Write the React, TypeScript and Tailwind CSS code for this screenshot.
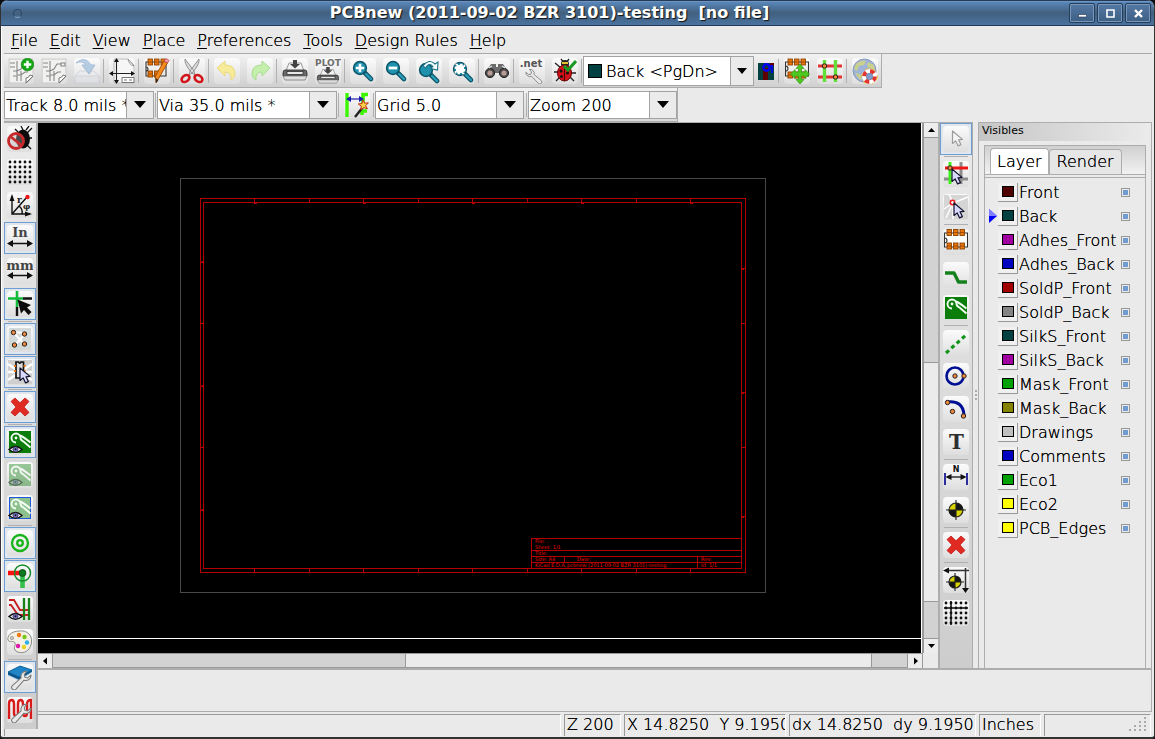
import { useState } from "react";
import type { ReactNode } from "react";

/* ---------- icon drawings, all on a 26 x 26 field ---------- */

function Sheet() {
  return (
    <g>
      <path d="M1 1h24v18l-6 6H1z" fill="#f1f1ef" stroke="#c4c4c4" />
      <path d="M25 18l-7 7v-5q3 0 4-3z" fill="#fff" stroke="#777" />
      <path d="M2 5h5M2 9h5M9 3v8M5 13h4l4-2 3-5h4M9 11v6M5 18h4v5M13 13v10M9 17h4l4-3h3M20 5h4v3h-4z" fill="none" stroke="#858585" strokeWidth="1.1" />
    </g>
  );
}

function Pads({ y, xs = [4, 10.5, 17] }: { y: number; xs?: number[] }) {
  return (
    <g>
      {xs.map((x) => (
        <g key={x}>
          <rect x={x} y={y} width="4.5" height="6" fill="#e8760f" stroke="#8d4300" strokeWidth=".9" />
          <path d={`M${x} ${y + 3}h4.5`} stroke="#8d4300" strokeWidth=".8" />
        </g>
      ))}
    </g>
  );
}

function Lens({ children, x = 10, y = 10 }: { children?: ReactNode; x?: number; y?: number }) {
  return (
    <g>
      <path d={`M${x + 5} ${y + 5}l6 6`} stroke="#0b5468" strokeWidth="4.6" strokeLinecap="round" />
      <path d={`M${x + 6} ${y + 6}l5 5`} stroke="#2d9db8" strokeWidth="2.4" strokeLinecap="round" />
      <circle cx={x} cy={y} r="6.4" fill="#2092ae" stroke="#0b5468" strokeWidth="1.5" />
      {children}
    </g>
  );
}

function Pointer({ x, y, fill = "#d9d9fb", stroke = "#10102c" }: { x: number; y: number; fill?: string; stroke?: string }) {
  return (
    <path
      transform={`translate(${x} ${y})`}
      d="M0 0v12.5l3.2-2.6 2.4 5 2.8-1.3-2.4-4.8 4-.4z"
      fill={fill}
      stroke={stroke}
      strokeWidth="1.2"
      strokeLinejoin="round"
    />
  );
}

function Wrench({ fill = "#e9e9e9" }: { fill?: string }) {
  return (
    <path
      d="M24.500 8.500a5.500 5.500 0 0 1-7.500 5.500l-8.500 9.500q-2 1.800-3.800 0t0-3.700l9.300-8.300a5.500 5.500 0 0 1 6-7l-2.700 3.500 .7 3 3 .6z"
      fill={fill}
      stroke="#7b7b7b"
      strokeWidth="1.1"
      strokeLinejoin="round"
    />
  );
}

function Printer() {
  return (
    <g>
      <path d="M7 5h12l3 8H4z" fill="#f4f4f4" stroke="#999" />
      <path d="M3 12h20q2 0 2 3v3H1v-3q0-3 2-3z" fill="#6a6a6a" stroke="#222" strokeWidth=".8" />
      <rect x="5" y="13.500" width="16" height="3" fill="#e8e8e8" stroke="#222" strokeWidth=".7" />
      <path d="M1 18h24l-2 4H3z" fill="#dedede" stroke="#777" strokeWidth=".8" />
      <path d="M11 2h4v4h3l-5 4.500L8 6h3z" fill="#444" />
    </g>
  );
}

function CopperArea({ faded = false, framed = false }: { faded?: boolean; framed?: boolean }) {
  return (
    <g opacity={faded ? 0.4 : 1}>
      <rect x="2.500" y="2.500" width="21" height="21" fill={framed ? "#8cc08c" : "#0a7d0a"} stroke={framed ? "#2157d8" : "#0a7d0a"} />
      <path d="M9 13.500a4.500 4.500 0 1 1 4.500-4.500q0 2 3 3.500l7 6M13 6.500q3 1 10.500 7" fill="none" stroke="#f4fff4" strokeWidth="1.9" />
      <circle cx="9" cy="9" r="1.400" fill="#f4fff4" />
    </g>
  );
}

function Eye() {
  return (
    <g>
      <path d="M2 20.500q6.500-6 13 0-6.500 5.500-13 0z" fill="#ececff" stroke="#111" strokeWidth="1.4" />
      <circle cx="8.500" cy="20.300" r="2.600" fill="#7a76cf" stroke="#222" strokeWidth=".6" />
      <circle cx="8.500" cy="20.300" r="1" fill="#111" />
    </g>
  );
}

function Cross() {
  return (
    <path
      d="M4 7.500L8 4l5 4.800L18 4l4 3.500-5 5.500 5 5.500-4 3.500-5-4.800L8 22l-4-3.500L9 13z"
      fill="#e02a22"
      stroke="#c01b15"
      strokeWidth=".8"
      strokeLinejoin="round"
    />
  );
}

function Target({ cx, cy, r }: { cx: number; cy: number; r: number }) {
  return (
    <g>
      <circle cx={cx} cy={cy} r={r} fill="#d8d300" stroke="#222" strokeWidth="1.2" />
      <path d={`M${cx} ${cy}V${cy - r}A${r} ${r} 0 0 1 ${cx + r} ${cy}zM${cx} ${cy}V${cy + r}A${r} ${r} 0 0 1 ${cx - r} ${cy}z`} fill="#151515" />
      <path d={`M${cx - r - 3} ${cy}h${2 * r + 6}M${cx} ${cy - r - 3}v${2 * r + 6}`} stroke="#222" strokeWidth="1.1" />
    </g>
  );
}

function Dot({ x, y, r = 2.2 }: { x: number; y: number; r?: number }) {
  return <circle cx={x} cy={y} r={r} fill="#f0883c" stroke="#222" strokeWidth="1" />;
}

function DotGrid() {
  const steps = [3, 8, 13, 18, 23];
  return (
    <g fill="#111">
      {steps.flatMap((y) => steps.map((x) => <circle key={`${x}-${y}`} cx={x} cy={y} r="1.400" />))}
    </g>
  );
}

const icons: Record<string, ReactNode> = {
  newBoard: (
    <g>
      <Sheet />
      <circle cx="19.500" cy="6.500" r="6.300" fill="#12a812" stroke="#0a7a0a" strokeWidth=".6" />
      <path d="M19.500 2.800v7.400M15.800 6.500h7.400" stroke="#fff" strokeWidth="2.400" />
    </g>
  ),
  openBoard: <Sheet />,
  save: (
    <g opacity=".45">
      <path d="M6 13h14l5 5v7H1v-7z" fill="#e8eaf0" stroke="#b4bcc9" />
      <path d="M1 18h24v7H1z" fill="#dadee6" stroke="#b4bcc9" />
      <path d="M2 5Q11-3 17 7h4l-6 9-7-9h4Q9 2 2 5z" fill="#6b9fd0" stroke="#4b7fb8" />
    </g>
  ),
  pageSettings: (
    <g>
      <path d="M5 1h14l6 6v18H5z" fill="#f6f6f6" stroke="#bbb" />
      <path d="M19 1l6 7q-5-1-6-7z" fill="#fff" stroke="#888" strokeWidth=".8" />
      <path d="M7.500 3v20M2.500 15.500H24" stroke="#222" strokeWidth="1.100" />
      <path d="M7.500 0l2.500 4h-5zM7.500 26l2.500-4h-5zM0 15.500l4-2.500v5zM26 15.500l-4-2.500v5z" fill="#111" />
      <path d="M13 19.500h12v5H13zM15 22h3M20 22h3" fill="#fff" stroke="#777" />
    </g>
  ),
  editModule: (
    <g>
      <path d="M2 4h20v14H2zM2 9a2 2 0 0 1 0 4" fill="none" stroke="#333" strokeWidth="1.100" />
      <Pads y={1} />
      <Pads y={13} xs={[4, 10.5]} />
      <path d="M23.500 5l-8 14-3.500 6-.5-7 8.500-15z" fill="#f58a1f" stroke="#9b4a00" strokeWidth=".9" />
      <path d="M20 3l3.500 2 1.500-2.500q-1.500-2.500-3.500-1.500z" fill="#f1a0a6" stroke="#b45" strokeWidth=".8" />
      <path d="M11.500 20l.5 5 2.500-3z" fill="#2a2a2a" />
    </g>
  ),
  cut: (
    <g>
      <path d="M6 1q-1 5 7 14l3 2-1-4zM20 1q1 5-7 14l-3 2 1-4z" fill="#dcdcdc" stroke="#888" strokeWidth=".9" />
      <g fill="none" stroke="#d3161a" strokeWidth="2.600">
        <ellipse cx="6.500" cy="20.500" rx="4.300" ry="3" transform="rotate(-35 6.500 20.500)" />
        <ellipse cx="19.500" cy="20.500" rx="4.300" ry="3" transform="rotate(35 19.500 20.500)" />
      </g>
    </g>
  ),
  undo: <path d="M3 10l8-7v4q10 0 10 9 0 4-4 6 1-8-6-8v4z" fill="#f7eb9a" stroke="#ead97c" strokeLinejoin="round" />,
  redo: <path d="M23 10l-8-7v4Q5 7 5 16q0 4 4 6-1-8 6-8v4z" fill="#c5efac" stroke="#a9dd90" strokeLinejoin="round" />,
  print: <Printer />,
  plot: (
    <g>
      <g transform="translate(1.500 7.500) scale(.88 .8)">
        <Printer />
      </g>
      <text x="13" y="7.500" textAnchor="middle" className="fill-[#6d6d6d] font-['DejaVu_Sans'] text-[9px] font-bold">PLOT</text>
    </g>
  ),
  zoomIn: (
    <Lens>
      <path d="M10 5.800v8.400M5.800 10h8.400" stroke="#fff" strokeWidth="2.600" />
    </Lens>
  ),
  zoomOut: (
    <Lens>
      <path d="M5.800 10h8.400" stroke="#fff" strokeWidth="2.800" />
    </Lens>
  ),
  zoomRedraw: (
    <g>
      <Lens y={12} />
      <path d="M7 8q6-8 12-2l3-2-.5 8-7-1.500 2.500-2Q13 4 9.500 10z" fill="#f8ffff" stroke="#1c7288" strokeWidth="1.100" />
    </g>
  ),
  zoomFit: (
    <Lens x={11} y={11}>
      <rect x="7" y="7" width="8" height="8" rx="2" fill="#fff" />
      <rect x="6.500" y="6.500" width="9" height="9" fill="none" stroke="#fff" strokeWidth="1.600" strokeDasharray="2.500 2" />
    </Lens>
  ),
  find: (
    <g>
      <path d="M7 6h5v3h2V6h5l5 8-4 5-4-4h-6l-4 4-4-5z" fill="#6c6c6c" />
      <circle cx="6" cy="15" r="4.600" fill="#4a4a4a" stroke="#222" />
      <circle cx="20" cy="15" r="4.600" fill="#4a4a4a" stroke="#222" />
      <circle cx="6" cy="15" r="2.600" fill="#b79a94" />
      <circle cx="20" cy="15" r="2.600" fill="#b79a94" />
      <path d="M8 8l-3 2M18 8l3 2" stroke="#ddd" strokeWidth="1.500" />
    </g>
  ),
  netlist: (
    <g>
      <g transform="translate(26 8) scale(-.78 .74)">
        <Wrench />
      </g>
      <text x="12" y="9" textAnchor="middle" className="fill-[#555] font-['DejaVu_Sans'] text-[10px] font-bold">.net</text>
    </g>
  ),
  drc: (
    <g>
      <path d="M3 5l6 5M2 14h6M4 23l5-5M22 23l-5-5M9 1l3 4M17 1l-3 4M24 15h-6" stroke="#222" strokeWidth="1.300" />
      <circle cx="13" cy="6" r="4" fill="#222" />
      <path d="M10 5h6" stroke="#e2c22b" strokeWidth="2" />
      <ellipse cx="12.500" cy="15" rx="7" ry="8" fill="#d21118" stroke="#6b0508" />
      <path d="M12.500 8v15" stroke="#400" />
      <g fill="#111">
        <circle cx="9" cy="13" r="1.500" />
        <circle cx="15.500" cy="15" r="1.500" />
        <circle cx="9.500" cy="18.500" r="1.500" />
      </g>
      <path d="M12 8l4 4 8-9" fill="none" stroke="#1a9a20" strokeWidth="3.200" />
    </g>
  ),
  layerPair: (
    <g>
      <path d="M5 5h16v17H5z" fill="#004040" />
      <path d="M10 10h5v12h-5zM17 5h4v3h-4z" fill="#5c0000" />
      <circle cx="13.500" cy="9.500" r="3.200" fill="none" stroke="#0000f4" strokeWidth="2.400" />
      <path d="M16 8h3v7" fill="none" stroke="#0000f4" strokeWidth="1.800" />
    </g>
  ),
  moduleMode: (
    <g>
      <path d="M1.500 4h23v14h-23zM1.500 8a2.500 2.500 0 0 1 0 5" fill="none" stroke="#333" strokeWidth="1.100" />
      <Pads y={1} />
      <Pads y={14} />
      <path d="M16 6l4 4.500h-2.500v3.500H21v-2.500l4.500 4.500-4.500 4.500V18h-3.500v3.500H20L16 26l-4-4.500h2.500V18H11v2.500L6.500 16l4.500-4.500V14h3.500v-3.500H12z" fill="#4fc921" stroke="#349b10" strokeWidth=".7" />
    </g>
  ),
  trackMode: (
    <g>
      <path d="M1 8h24M1 19h24" stroke="#e03434" strokeWidth="3" />
      <path d="M7.500 2v22M18.500 2v22" stroke="#63e03a" strokeWidth="3.400" />
      <Dot x={7.5} y={8} />
      <Dot x={18.5} y={19} />
    </g>
  ),
  web: (
    <g>
      <circle cx="12.500" cy="12.500" r="11.500" fill="#9fb3d9" stroke="#8a99b8" />
      <path d="M4 6q5-5 10-3l-2 4-5 1-2 5-3-2zM16 4l6 3 1 6-5-2-3-3zM3 15l5 1 2 6-3-1z" fill="#c9cf8d" />
      <circle cx="17.500" cy="18.500" r="5.500" fill="none" stroke="#fff" strokeWidth="4" />
      <circle cx="17.500" cy="18.500" r="5.500" fill="none" stroke="#e4322e" strokeWidth="4" strokeDasharray="4.320 4.320" />
      <circle cx="17.500" cy="18.500" r="7.900" fill="none" stroke="#e9c22e" strokeWidth=".9" strokeDasharray="4 4" />
      <circle cx="17.500" cy="18.500" r="3.200" fill="#7f9bd0" stroke="#777" strokeWidth=".5" />
    </g>
  ),
  autoTrack: (
    <g>
      <path d="M3 1v24" stroke="#3cf600" strokeWidth="3.400" />
      <path d="M24 2.500h-5v13M18 23v-4h5" fill="none" stroke="#3cf600" strokeWidth="3.600" />
      <path d="M4 7h14" stroke="#1b1bb0" strokeWidth="1.200" />
      <path d="M2 7l5-3v6zM20 7l-5-3v6z" fill="#1b1bb0" />
      <path d="M11 25l8-10" stroke="#222" strokeWidth="2.400" />
      <path d="M19 8l1.600 3.200 3.800-.4-2.700 2.900 1.700 3.200-3.500-1.300-3 2.200.4-3.700-3-2.100 3.700-.6z" fill="#ffd24a" stroke="#c22d12" />
    </g>
  ),
  drcOff: (
    <g>
      <path d="M8 3l5 5M25 2l-5 5M25 12h-5M24 23l-4-4M14 0l2 4M22 0l-3 4" stroke="#111" strokeWidth="1.300" />
      <ellipse cx="16" cy="13" rx="7" ry="9.500" fill="#0c0c0c" />
      <circle cx="9" cy="15" r="7.500" fill="#bbb" fillOpacity=".35" stroke="#c72a2a" strokeWidth="2.800" />
      <path d="M3.500 10.500l11 9" stroke="#c72a2a" strokeWidth="2.800" />
    </g>
  ),
  grid: <DotGrid />,
  polar: (
    <g>
      <path d="M5 4v18h18M5 22L20 5M12 14q4 3 3 8" fill="none" stroke="#111" strokeWidth="1.400" />
      <path d="M5 2l2.500 7h-5zM25 22l-7-2.500v5z" fill="#111" />
      <circle cx="20.500" cy="5" r="2.200" fill="#f01818" />
      <text x="10" y="11" className="fill-[#222] font-['DejaVu_Serif'] text-[9px] font-bold">r</text>
      <text x="16" y="17" className="fill-[#222] font-['DejaVu_Serif'] text-[8px] font-bold">φ</text>
    </g>
  ),
  inches: (
    <g>
      <text x="13" y="12" textAnchor="middle" className="fill-[#444] font-['DejaVu_Serif'] text-[13px] font-bold">In</text>
      <path d="M3 18.500h20" stroke="#111" strokeWidth="1.500" />
      <path d="M0 18.500l6-3.500v7zM26 18.500l-6-3.500v7z" fill="#111" />
    </g>
  ),
  mm: (
    <g>
      <text x="13" y="12" textAnchor="middle" className="fill-[#444] font-['DejaVu_Serif'] text-[13px] font-bold">mm</text>
      <path d="M3 17.500h20" stroke="#111" strokeWidth="1.500" />
      <path d="M0 17.500l6-3.500v7zM26 17.500l-6-3.500v7z" fill="#111" />
    </g>
  ),
  cursorShape: (
    <g>
      <path d="M16 7.500h9M10 16v9" stroke="#111" strokeWidth="2.400" />
      <path d="M1 7.500h15M10 0v16" stroke="#12bb3a" strokeWidth="2.600" />
      <path d="M10.500 8.500l3.500 14 3-3.500 4.500 5 3-3-4.500-4.500 4-2.500z" fill="#0a0a0a" />
    </g>
  ),
  ratsnest: (
    <g>
      <rect x="2" y="2" width="22" height="22" fill="#d3dad9" />
      <path d="M6 6l12 13M8 19l11-12M6 6l11 1" stroke="#fff" strokeWidth="2" />
      <Dot x={6.5} y={6.5} />
      <Dot x={17.500} y={8} />
      <Dot x={7.5} y={19} />
      <Dot x={17.500} y={18} />
    </g>
  ),
  moduleRatsnest: (
    <g>
      <rect x="1" y="1" width="24" height="24" fill="#cfcfcf" />
      <path d="M1 5l24 16M1 21L25 5M1 13h24" stroke="#fff" strokeWidth="2.600" />
      <path d="M9 3h2.500q1.200 2.500 2.500 0h2.500v16H9z" fill="#ddd" stroke="#111" strokeWidth="1.700" />
      <path d="M8 6v2M8 11v2M17.500 6v2M17.500 11v2" stroke="#e8760f" strokeWidth="2" />
      <Pointer x={13} y={9} />
    </g>
  ),
  cross: <Cross />,
  zoneShow: (
    <g>
      <CopperArea />
      <Eye />
    </g>
  ),
  zoneHide: (
    <g>
      <CopperArea faded />
      <g opacity=".45">
        <Eye />
      </g>
    </g>
  ),
  zoneOutline: (
    <g>
      <CopperArea framed />
      <Eye />
    </g>
  ),
  padSketch: (
    <g fill="none" stroke="#18b41c" strokeWidth="2.300">
      <circle cx="13" cy="13" r="8" />
      <circle cx="13" cy="13" r="2.800" />
    </g>
  ),
  viaSketch: (
    <g>
      <path d="M1 10h12" stroke="#fb1010" strokeWidth="4.600" />
      <path d="M15.500 10v15" stroke="#35c04e" strokeWidth="4.600" />
      <circle cx="15.500" cy="10" r="8" fill="none" stroke="#148a2a" strokeWidth="1.500" />
      <circle cx="15.500" cy="10" r="3.400" fill="#0c7a1e" stroke="#0a5515" />
    </g>
  ),
  trackSketch: (
    <g>
      <path d="M2 4h5l6 10h10M2 9h2l7 10h12" fill="none" stroke="#c52020" strokeWidth="1.800" />
      <path d="M17 2v22M22 2v22" stroke="#178017" strokeWidth="2.300" />
      <Eye />
    </g>
  ),
  palette: (
    <g>
      <path d="M13 2C3 2 0 8 1 11s6 0 7 3-2 4 0 7 9 4 13 0 5-12 1-16-9-3-9-3z" fill="#f4f0e4" stroke="#888" />
      <circle cx="5" cy="9" r="1.600" fill="#ccc" stroke="#888" strokeWidth=".7" />
      <circle cx="12" cy="6" r="2.200" fill="#f47a16" />
      <circle cx="17.500" cy="8" r="2.200" fill="#78c818" />
      <circle cx="20" cy="13.500" r="2.200" fill="#2db0e8" />
      <circle cx="17" cy="18" r="2.200" fill="#e8d21a" />
      <circle cx="11" cy="17" r="2.200" fill="#e01aa8" />
    </g>
  ),
  layersManager: (
    <g>
      <path d="M1 11l11 5 13-8v-2L13 2 1 8z" fill="#0b4f80" />
      <path d="M1 8l12-6 12 4-13 7z" fill="#1f85c8" stroke="#0b5d98" strokeWidth=".8" />
      <path d="M1 11l11 5 13-8" fill="none" stroke="#7cc0ec" strokeWidth=".8" />
      <g transform="translate(1 3) scale(.94)">
        <Wrench />
      </g>
    </g>
  ),
  microwave: (
    <g>
      <path d="M2 22V7q0-4 2.500-4T7 7v9q0 3 2 3t2-3V7q0-4 2.500-4T16 7v9q0 3 2 3t2-3V7q0-4 4-4v19" fill="none" stroke="#d81a1a" strokeWidth="2.400" />
      <g transform="translate(1 3) scale(.94)">
        <Wrench />
      </g>
    </g>
  ),
  arrow: <Pointer x={9.5} y={5} fill="#f4f4f4" stroke="#9c9c9c" />,
  netHighlight: (
    <g>
      <path d="M18 1v22M1 18h24" stroke="#8c8c8c" strokeWidth="3" />
      <path d="M7 1v22" stroke="#3ff01a" strokeWidth="3" />
      <path d="M2 7h23" stroke="#f01414" strokeWidth="3" />
      <Dot x={7} y={7} />
      <Pointer x={9} y={8} />
    </g>
  ),
  localRats: (
    <g>
      <rect x="1" y="1" width="24" height="24" fill="#d5d5d5" />
      <path d="M10 9L25 3M10 9L3 24M10 9L1 15M10 9V25M10 9L6 0" stroke="#fff" strokeWidth="1.500" />
      <circle cx="9.500" cy="8.500" r="2.200" fill="#fff" stroke="#ee1c1c" strokeWidth="1.600" />
      <Pointer x={11} y={9} />
    </g>
  ),
  addModule: (
    <g>
      <path d="M1.500 4h23v14h-23zM1.500 9a2.500 2.500 0 0 1 0 5" fill="#fff" stroke="#333" strokeWidth="1.100" />
      <Pads y={0.5} />
      <Pads y={14} />
    </g>
  ),
  addTrack: <path d="M2 11h9l4.500 9H24" fill="none" stroke="#16801c" strokeWidth="3.400" strokeLinejoin="round" />,
  addZone: <CopperArea />,
  addLine: <path d="M3 23L23 5" stroke="#12951b" strokeWidth="3.200" strokeDasharray="4 3.200" />,
  addCircle: (
    <g>
      <circle cx="12" cy="13" r="8.500" fill="none" stroke="#000e94" strokeWidth="2.600" />
      <Dot x={12} y={13} />
      <Dot x={21} y={13} />
    </g>
  ),
  addArc: (
    <g>
      <path d="M4 6q16-2 17 13" fill="none" stroke="#000e94" strokeWidth="3" />
      <Dot x={4.5} y={6.5} />
      <Dot x={9.5} y={15.5} />
      <Dot x={20.500} y={20} />
    </g>
  ),
  addText: (
    <text x="13.500" y="20" textAnchor="middle" className="fill-[#2e2e2e] font-['DejaVu_Serif'] text-[20px] font-bold">T</text>
  ),
  addDimension: (
    <g>
      <path d="M2 9v12M24 9v12" stroke="#1a1a94" strokeWidth="1.800" />
      <path d="M4 13h18" stroke="#111" strokeWidth="1.300" />
      <path d="M2.500 13l6-3v6zM23.500 13l-6-3v6z" fill="#111" />
      <text x="13" y="8" textAnchor="middle" className="fill-[#111] font-['DejaVu_Sans'] text-[8px] font-bold">N</text>
    </g>
  ),
  addTarget: <Target cx={13} cy={13} r={7} />,
  offset: (
    <g>
      <path d="M5 3.500h21M22.500 1v20" stroke="#333" strokeWidth="1.500" />
      <path d="M0 3.500l6-3v6zM22.500 26l3.500-5h-7z" fill="#111" />
      <Target cx={12} cy={15} r={6} />
    </g>
  ),
  gridOrigin: (
    <g>
      <DotGrid />
      <path d="M1 8h24M8 1v24" stroke="#111" strokeWidth="1.500" />
    </g>
  ),
};

/* ---------- small parts ---------- */

function ToolButton({ icon, label, checked, vertical, dim }: { icon: string; label: string; checked?: boolean; vertical?: boolean; dim?: boolean }) {
  const size = vertical ? "h-[33px] w-8 pb-px" : "h-[31px] w-[33px]";
  return (
    <button type="button" aria-label={label} aria-pressed={checked} disabled={dim} className={`shrink-0 ${size}`}>
      <span className={`flex h-full w-full items-center justify-center ${checked ? "border border-[#6f9dd1] bg-[#dfe6ee]" : ""}`}>
        <span className="rounded-sm bg-linear-to-b from-[#fbfbfb] to-[#dedede]">
          <svg viewBox="0 0 26 26" className="block size-[26px]" aria-hidden="true">
            {icons[icon]}
          </svg>
        </span>
      </span>
    </button>
  );
}

function Sep({ vertical }: { vertical?: boolean }) {
  return vertical ? (
    <span className="mx-1 mb-px h-px shrink-0 self-stretch bg-[#b0b0b0]" />
  ) : (
    <span className="mr-px h-6 w-px shrink-0 self-center bg-[#b0b0b0]" />
  );
}

function Combo({ label, value, className, swatch }: { label: string; value: string; className: string; swatch?: string }) {
  return (
    <span className={`relative flex shrink-0 items-stretch border border-[#a3a3a3] bg-white ${className}`}>
      {swatch && <span className={`ml-1 size-[14px] shrink-0 self-center border border-black ${swatch}`} />}
      <select
        aria-label={label}
        className={`min-w-0 flex-1 appearance-none bg-transparent pt-[2px] text-base outline-none [text-shadow:0_0_0_#000] ${swatch ? "pr-6 pl-1" : "pr-[27px] pl-px"}`}
      >
        <option>{value}</option>
      </select>
      <span className={`pointer-events-none absolute inset-y-0 right-0 flex items-center justify-center border-l border-[#a3a3a3] bg-[#ebebeb] ${swatch ? "w-[23px]" : "w-[27px]"}`}>
        <svg viewBox="0 0 12 7" className={swatch ? "h-[6px] w-[10px]" : "h-[7px] w-3"} aria-hidden="true">
          <path d="M0 0h12L6 7z" fill="#000" />
        </svg>
      </span>
    </span>
  );
}

function ScrollArrow({ dir, label }: { dir: "up" | "down" | "left" | "right"; label: string }) {
  const d = {
    up: "M2 7h7L5.500 3z",
    down: "M2 3h7L5.500 7z",
    left: "M7 1.500v7L3 5z",
    right: "M4 1.500v7l4-3.500z",
  }[dir];
  return (
    <button type="button" aria-label={label} className="flex size-[14px] shrink-0 items-center justify-center bg-[#ededed]">
      <svg viewBox="0 0 10 10" className="size-[10px]" aria-hidden="true">
        <path d={d} fill="#000" />
      </svg>
    </button>
  );
}

const menus = [
  ["F", "ile"],
  ["E", "dit"],
  ["V", "iew"],
  ["P", "lace"],
  ["P", "references"],
  ["T", "ools"],
  ["D", "esign Rules"],
  ["H", "elp"],
];

const layers = [
  { name: "Front", color: "bg-[#500000]" },
  { name: "Back", color: "bg-[#004040]" },
  { name: "Adhes_Front", color: "bg-[#a000a0]" },
  { name: "Adhes_Back", color: "bg-[#0000c0]" },
  { name: "SoldP_Front", color: "bg-[#a00000]" },
  { name: "SoldP_Back", color: "bg-[#848484]" },
  { name: "SilkS_Front", color: "bg-[#004040]" },
  { name: "SilkS_Back", color: "bg-[#a000a0]" },
  { name: "Mask_Front", color: "bg-[#00a000]" },
  { name: "Mask_Back", color: "bg-[#848400]" },
  { name: "Drawings", color: "bg-[#c0c0c0]" },
  { name: "Comments", color: "bg-[#0000c0]" },
  { name: "Eco1", color: "bg-[#00a000]" },
  { name: "Eco2", color: "bg-[#ffff00]" },
  { name: "PCB_Edges", color: "bg-[#ffff00]" },
];

const topTools: (string[] | null)[] = [
  ["newBoard", "New board"], ["openBoard", "Open board"], ["save", "Save board"], null,
  ["pageSettings", "Page settings"], null,
  ["editModule", "Open module editor"], null,
  ["cut", "Cut"], null,
  ["undo", "Undo"], ["redo", "Redo"], null,
  ["print", "Print board"], ["plot", "Plot"], null,
  ["zoomIn", "Zoom in"], ["zoomOut", "Zoom out"], ["zoomRedraw", "Redraw"], ["zoomFit", "Zoom auto"], null,
  ["find", "Find"], null,
  ["netlist", "Read netlist"], ["drc", "Design rules check"], null,
];

const leftTools: ([string, string, boolean] | null)[] = [
  ["drcOff", "Disable DRC", false], ["grid", "Show grid", false], ["polar", "Polar coordinates", false],
  ["inches", "Units in inches", true], ["mm", "Units in millimeters", false], ["cursorShape", "Cursor shape", true], null,
  ["ratsnest", "Show ratsnest", true], ["moduleRatsnest", "Module ratsnest", true], null,
  ["cross", "Auto delete track", true], null,
  ["zoneShow", "Show filled zones", true], ["zoneHide", "Hide filled zones", false], ["zoneOutline", "Zone outlines", false], null,
  ["padSketch", "Pads sketch", true], ["viaSketch", "Vias sketch", true], ["trackSketch", "Tracks sketch", false], ["palette", "High contrast", false], null,
  ["layersManager", "Layers manager", true], ["microwave", "Microwave tools", false],
];

const rightTools: ([string, string, boolean] | null)[] = [
  ["arrow", "Select", true], null,
  ["netHighlight", "Highlight net", false], ["localRats", "Local ratsnest", false], null,
  ["addModule", "Add module", false], ["addTrack", "Add track", false], ["addZone", "Add zone", false], null,
  ["addLine", "Add line", false], ["addCircle", "Add circle", false], ["addArc", "Add arc", false], ["addText", "Add text", false], null,
  ["addDimension", "Add dimension", false], ["addTarget", "Add target", false], null,
  ["cross", "Delete", false], null,
  ["offset", "Drill offset", false], ["gridOrigin", "Grid origin", false],
];

function VerticalBar({ tools, label, className }: { tools: ([string, string, boolean] | null)[]; label: string; className: string }) {
  return (
    <div role="toolbar" aria-label={label} className={`flex shrink-0 flex-col border-t border-[#adadad] bg-linear-to-b from-[#eaeaea] to-[#cdcdcd] ${className}`}>
      {tools.map((t, i) => (t ? <ToolButton key={i} icon={t[0]} label={t[1]} checked={t[2]} vertical /> : <Sep key={i} vertical />))}
    </div>
  );
}

function BoardCanvas() {
  const cols = [255, 364, 473, 582, 691];
  const rows = [262, 386, 510];
  return (
    <svg viewBox="38 123 884 530" preserveAspectRatio="xMinYMin slice" className="h-full w-full" role="img" aria-label="Board sheet">
      <rect x="38" y="123" width="884" height="530" fill="#000" />
      <g fill="none" stroke="#b40000" shapeRendering="crispEdges">
        <rect x="180.500" y="178.500" width="585" height="414" stroke="#484848" />
        <rect x="200.500" y="198.500" width="545" height="374" />
        <rect x="203.500" y="202.500" width="538" height="366" />
        <path d="M309.500 198v4M418.500 198v4M527.500 198v4M636.500 198v4M309.500 568v4M418.500 568v4M527.500 568v4M636.500 568v4M200 323.500h3M200 447.500h3M742 323.500h3M742 447.500h3" />
        <path d="M531.500 568v-29.500H742M531.500 550.500H742M531.500 556.500H742M531.500 562.500H742M564.500 556.500v6M697.500 556.500v12" />
        {cols.map((x) => (
          <path key={x} d={`M${x - 0.5} 199v4h2M${x - 0.5} 569v3h2`} />
        ))}
        {rows.map((y) => (
          <path key={y} d={`M201 ${y + 0.5}h3M202 ${y - 0.5}h2M742 ${y + 6.5}h3M742 ${y + 7.5}h2`} />
        ))}
        <path d="M38 638.500h884M921.500 123v530" stroke="#fff" />
      </g>
      <g className="fill-[#f00000] font-['DejaVu_Sans'] text-[5px] font-normal [text-shadow:none]">
        <text x="535" y="543">File: .</text>
        <text x="535" y="549">Sheet: 1/1</text>
        <text x="535" y="555">Title:</text>
        <text x="535" y="561">Size: A4</text>
        <text x="577" y="561">Date:</text>
        <text x="701" y="561">Rev:</text>
        <text x="535" y="567">KiCad E.D.A.</text>
        <text x="567" y="567">pcbnew (2011-09-02 BZR 3101)-testing</text>
        <text x="701" y="567">Id: 1/1</text>
      </g>
    </svg>
  );
}

function Visibles() {
  const [tab, setTab] = useState("Layer");
  return (
    <aside className="flex w-[174px] shrink-0 flex-col border border-b-0 border-[#adadad]">
      <h2 className="h-[18px] bg-linear-to-r from-[#c6c6c6] to-[#ebebeb] pl-[3px] font-['DejaVu_Sans'] text-[11px] leading-4 font-normal [text-shadow:none]">Visibles</h2>
      <div className="mx-[5px] mt-1 flex min-h-0 flex-1 flex-col border border-b-0 border-[#adadad]">
        <div role="tablist" className="flex h-[29px] shrink-0 items-end border-b border-[#adadad] bg-linear-to-b from-[#d0d0d0] to-[#f2f2f2] pl-[5px]">
          {["Layer", "Render"].map((name) => (
            <button
              key={name}
              type="button"
              role="tab"
              aria-selected={tab === name}
              onClick={() => setTab(name)}
              className={
                tab === name
                  ? "h-[26px] rounded-t-sm border border-b-0 border-[#adadad] bg-white px-[6px] leading-6 [text-shadow:0_0_0_#000]"
                  : "h-[25px] rounded-t-sm border border-b-0 border-[#adadad] bg-[#e6e6e6] px-[7px] leading-6 [text-shadow:0_0_0_#000]"
              }
            >
              {name}
            </button>
          ))}
        </div>
        <ul className="mt-[2px] flex-1 border-t border-[#adadad] pt-[2px]">
          {layers.map((layer) => (
            <li key={layer.name} className="flex h-6 items-center">
              <span className="flex h-6 w-3 shrink-0 items-center justify-end">
                {layer.name === "Back" && (
                  <svg viewBox="0 0 8 14" className="h-[14px] w-2" aria-hidden="true">
                    <path d="M0 0v14l8-7z" fill="#0000f4" />
                    <path d="M0 0v7h8z" fill="#8080ff" />
                  </svg>
                )}
              </span>
              <button type="button" aria-label={`${layer.name} color`} className="ml-px flex h-[19px] w-5 shrink-0 items-center justify-center border-r border-b border-[#999] bg-[#f0f0f0]">
                <span className={`block h-[11px] w-3 border border-black ${layer.color}`} />
              </button>
              <label htmlFor={`layer-${layer.name}`} className="min-w-0 flex-1 pt-px pl-px leading-6">{layer.name}</label>
              <input
                id={`layer-${layer.name}`}
                type="checkbox"
                defaultChecked
                className="mr-[15px] size-[9px] shrink-0 appearance-none border border-[#999] bg-white p-px checked:bg-[#6f9dd1] checked:bg-clip-content"
              />
            </li>
          ))}
        </ul>
      </div>
    </aside>
  );
}

function StatusField({ children, className }: { children?: ReactNode; className: string }) {
  return (
    <div className={`h-[22px] overflow-hidden border-t border-r border-l border-t-[#999] border-r-white border-l-[#999] pl-[2px] leading-5 whitespace-pre ${className}`}>
      {children}
    </div>
  );
}

function WindowButton({ label, children }: { label: string; children: ReactNode }) {
  return (
    <button type="button" aria-label={label} className="flex h-5 w-[26px] items-center justify-center rounded-xs border border-[#263e5a] bg-linear-to-b from-[#5379a4] to-[#3f5f84] shadow-[inset_0_0_0_1px_#7797bb]">
      <svg viewBox="0 0 11 11" className="size-[11px]" aria-hidden="true">{children}</svg>
    </button>
  );
}

export default function App() {
  return (
    <div className="h-screen min-h-[600px] bg-[#0a0f16] font-['DejaVu_Sans_Light','DejaVu_Sans',sans-serif] text-base font-extralight text-black [text-shadow:0_0_0_#000]">
      <div className="flex h-full flex-col overflow-hidden rounded-t-lg rounded-b-sm border-x border-b-2 border-[#333] bg-[#eaeaea]">
        <header className="flex h-[26px] shrink-0 items-center border-t border-b border-t-[#243a55] border-b-[#223a56] bg-linear-to-b from-[#5b8abf] via-[#42607f] to-[#4a739f] px-3 shadow-[inset_0_1px_0_#6c95c4]">
          <span className="size-[9px] rounded-full border border-[#2c4765] border-b-[#86a8cc]" />
          <h1 className="ml-2 flex-1 text-center font-['DejaVu_Sans'] text-base leading-6 font-bold whitespace-pre text-white [text-shadow:1px_1px_1px_#111]">
            PCBnew (2011-09-02 BZR 3101)-testing  [no file]
          </h1>
          <div className="-mr-[9px] flex gap-[2px]">
            <WindowButton label="Minimize"><path d="M1.500 6.500h8v2.500h-8z" fill="#fff" stroke="#1c3049" strokeWidth=".6" /></WindowButton>
            <WindowButton label="Maximize"><path d="M2 2h7v7H2z" fill="none" stroke="#fff" strokeWidth="1.600" /></WindowButton>
            <WindowButton label="Close"><path d="M2 2l7 7M9 2l-7 7" stroke="#fff" strokeWidth="2.400" /></WindowButton>
          </div>
        </header>

        <div className="flex min-h-0 flex-1 flex-col border-l border-white pr-[2px] pl-[2px]">
          <nav className="flex h-7 shrink-0 border-b border-[#a8a8a8] pl-px">
            {menus.map(([key, rest]) => (
              <button key={key + rest} type="button" className="px-[6px] pt-[2px] leading-[25px] whitespace-nowrap [text-shadow:0_0_0_#000]">
                <span className="underline underline-offset-2">{key}</span>{rest}
              </button>
            ))}
          </nav>

          <div role="toolbar" aria-label="Main" className="flex h-[34px] shrink-0 items-center self-start border-r border-b border-[#adadad] bg-linear-to-b from-[#f2f2f2] to-[#d0d0d0]">
            {topTools.map((t, i) => (t ? <ToolButton key={i} icon={t[0]} label={t[1]} dim={["save", "undo", "redo"].includes(t[0])} /> : <Sep key={i} />))}
            <Combo label="Active layer" value="Back <PgDn>" className="h-[30px] w-[171px]" swatch="bg-[#004040]" />
            <button type="button" aria-label="Layer pair" className="flex w-6 shrink-0 justify-center">
              <svg viewBox="0 0 26 26" className="size-[26px] shrink-0" aria-hidden="true">{icons.layerPair}</svg>
            </button>
            <Sep />
            <ToolButton icon="moduleMode" label="Module mode" />
            <ToolButton icon="trackMode" label="Track mode" />
            <Sep />
            <ToolButton icon="web" label="Web router" />
          </div>

          <div role="toolbar" aria-label="Settings" className="flex h-[34px] shrink-0 items-center self-start border-r border-b border-[#adadad] bg-linear-to-b from-[#f2f2f2] to-[#d8d8d8]">
            <Combo label="Track width" value="Track 8.0 mils *" className="h-7 w-[150px]" />
            <span className="w-px" /><Sep />
            <Combo label="Via size" value="Via 35.0 mils *" className="h-7 w-[180px]" />
            <span className="w-px" /><Sep />
            <ToolButton icon="autoTrack" label="Auto track width" />
            <Sep />
            <Combo label="Grid" value="Grid 5.0" className="h-7 w-[149px]" />
            <span className="w-[2px]" /><Sep />
            <Combo label="Zoom" value="Zoom 200" className="h-7 w-[149px]" />
          </div>

          <div className="flex min-h-0 flex-1">
            <div className="z-10 -mb-[17px] flex">
              <VerticalBar tools={leftTools} label="Display options" className="w-[34px] border-r-2" />
            </div>

            <div className="flex min-w-0 flex-1 flex-col">
              <div className="flex min-h-0 flex-1">
                <main className="flex min-w-0 flex-1 flex-col border-t border-r-2 border-[#adadad]">
                  <div className="flex min-h-0 flex-1">
                    <div className="min-w-0 flex-1 bg-black">
                      <BoardCanvas />
                    </div>
                    <div className="flex w-4 shrink-0 flex-col items-stretch border-l-2 border-[#999]">
                      <ScrollArrow dir="up" label="Scroll up" />
                      <div className="flex-[226] border-t border-[#999] bg-[#d2d2d2]" />
                      <div className="flex-[240] border-y border-[#999] bg-[#ebebeb]" />
                      <div className="flex-[36] border-b border-[#999] bg-[#d2d2d2]" />
                      <ScrollArrow dir="down" label="Scroll down" />
                    </div>
                  </div>
                  <div className="mr-[15px] flex h-[15px] shrink-0 border-y border-r border-[#999]">
                    <ScrollArrow dir="left" label="Scroll left" />
                    <div className="flex-[354] border-l border-[#999] bg-[#d2d2d2]" />
                    <div className="flex-[467] border-x border-[#999] bg-[#ebebeb]" />
                    <div className="flex-[35] border-r border-[#999] bg-[#d2d2d2]" />
                    <ScrollArrow dir="right" label="Scroll right" />
                  </div>
                </main>

                <VerticalBar tools={rightTools} label="Drawing tools" className="w-[33px] border-r" />

                <div className="flex w-[5px] shrink-0 flex-col items-center justify-center gap-[2px]">
                  <i className="size-[2px] bg-[#aaa]" />
                  <i className="size-[2px] bg-[#aaa]" />
                  <i className="size-[2px] bg-[#aaa]" />
                </div>

                <Visibles />
              </div>
              <div className="h-11 shrink-0 border-t-2 border-r border-b border-[#adadad]" />
            </div>
          </div>

          <footer className="flex h-[25px] shrink-0 items-center gap-[3px] pr-px">
            <StatusField className="min-w-0 flex-1" />
            <StatusField className="w-[57px]">Z 200</StatusField>
            <StatusField className="w-[162px]">X 14.8250  Y 9.1950</StatusField>
            <StatusField className="w-[187px]">dx 14.8250  dy 9.1950</StatusField>
            <StatusField className="w-[62px]">Inches</StatusField>
            <StatusField className="flex w-[107px] items-end justify-end">
              <svg viewBox="0 0 18 16" className="mr-1 mb-1 h-4 w-[18px]" aria-hidden="true">
                <path d="M16 1h2v2h-2zM16 5h2v2h-2zM11 5h2v2h-2zM16 9h2v2h-2zM11 9h2v2h-2zM6 9h2v2h-2zM16 13h2v2h-2zM11 13h2v2h-2zM6 13h2v2h-2zM1 13h2v2H1z" fill="#aaa" />
              </svg>
            </StatusField>
          </footer>
        </div>
      </div>
    </div>
  );
}
